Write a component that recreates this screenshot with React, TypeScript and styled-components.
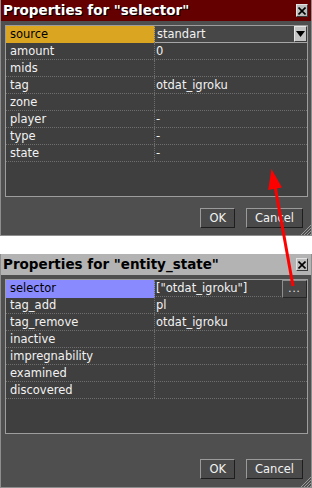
import React from 'react'
import styled, { createGlobalStyle } from 'styled-components'

const GlobalStyle = createGlobalStyle`
  html, body { margin: 0; padding: 0; background: #fff; }
  body { font-family: "DejaVu Sans", Verdana, sans-serif; }
`

const Page = styled.div`
  position: relative;
  width: 312px;
  height: 488px;
  display: flex;
  flex-direction: column;
  gap: 18px;
  overflow: hidden;
`

const Window = styled.section<{ $h: number }>`
  position: relative;
  height: ${p => p.$h}px;
  box-sizing: border-box;
  border: 1px solid #8e8e8e;
  border-top: none;
  background: #4f4f4f;
  display: flex;
  flex-direction: column;
`

const TitleBar = styled.div<{ $active?: boolean }>`
  height: 21px;
  box-sizing: border-box;
  padding: 0 3px 2px 2px;
  display: flex;
  align-items: center;
  justify-content: space-between;
  background: ${p => (p.$active ? '#640000' : '#b3b3b3')};
  color: ${p => (p.$active ? '#fff' : '#000')};
  text-shadow: ${p => (p.$active ? '1px 1px 0 #000' : 'none')};
  font-weight: bold;
  font-size: 13.5px;
  white-space: nowrap;
`

const CloseBox = styled.div`
  width: 12px;
  height: 13px;
  box-sizing: border-box;
  margin-top: 2px;
  background: #bdbdbd;
  border: 1px solid #e2e2e2;
  border-right-color: #3a3a3a;
  border-bottom-color: #3a3a3a;
  display: flex;
  align-items: center;
  justify-content: center;
`

const Body = styled.div`
  padding: 4px 3px 0 4px;
`

const Grid = styled.div<{ $h: number }>`
  height: ${p => p.$h}px;
  box-sizing: border-box;
  border: 1px solid #9d9d9d;
  background: #3f3f3f;
`

const Row = styled.div`
  display: grid;
  grid-template-columns: 149px 1fr;
  height: 17px;
  box-sizing: border-box;
  border-bottom: 1px dotted #6e6e6e;
  font-size: 11.5px;
  line-height: 16px;
`

const Key = styled.div<{ $hl?: string }>`
  padding-left: 4px;
  border-right: 1px dotted #6e6e6e;
  background: ${p => p.$hl ?? 'transparent'};
  color: ${p => (p.$hl ? '#000' : '#f2f2f2')};
  white-space: nowrap;
`

const Value = styled.div`
  display: flex;
  align-items: stretch;
  min-width: 0;
  padding-left: 1px;
  color: #f2f2f2;
  white-space: nowrap;
`

const ValueText = styled.span`
  flex: 1;
`

const SelectBox = styled.div`
  flex: 1;
  display: flex;
  box-sizing: border-box;
  margin-left: -1px;
  padding-left: 2px;
  background: #474747;
  border-bottom: 1px solid #a6a6a6;
`

const SelectArrow = styled.div`
  width: 13px;
  box-sizing: border-box;
  background: #c4c4c4;
  border: 1px solid #e6e6e6;
  border-right-color: #3a3a3a;
  border-bottom-color: #3a3a3a;
  display: flex;
  align-items: center;
  justify-content: center;
`

const DotsButton = styled.div`
  width: 25px;
  box-sizing: border-box;
  background: #474747;
  border: 1px solid #8e8e8e;
  border-right-color: #262626;
  border-bottom-color: #262626;
  color: #f2f2f2;
  font-size: 10px;
  line-height: 16px;
  text-align: center;
  letter-spacing: 1px;
`

const Footer = styled.div<{ $pad: number }>`
  margin-top: auto;
  display: flex;
  justify-content: flex-end;
  gap: 11px;
  padding: 0 8px ${p => p.$pad}px 0;
`

const Button = styled.div`
  height: 20px;
  box-sizing: border-box;
  padding: 0 8px;
  background: #4a4a4a;
  border: 1px solid #9a9a9a;
  border-right-color: #1e1e1e;
  border-bottom-color: #1e1e1e;
  color: #f2f2f2;
  font-size: 11.5px;
  line-height: 18px;
`

const Grip = styled.svg`
  position: absolute;
  right: 0;
  bottom: 0;
`

const Overlay = styled.svg`
  position: absolute;
  left: 0;
  top: 0;
  pointer-events: none;
`

const CloseIcon = () => (
  <svg width="8" height="8" viewBox="0 0 8 8">
    <path d="M0.5 0.5L7.5 7.5M7.5 0.5L0.5 7.5" stroke="#000" strokeWidth="1.6" />
  </svg>
)

const ResizeGrip = () => (
  <Grip width="11" height="11" viewBox="0 0 11 11">
    <path d="M11 1L1 11M11 4L4 11M11 7L7 11M11 10L10 11" stroke="#9a9a9a" strokeWidth="1" />
  </Grip>
)

interface Prop {
  name: string
  value?: string
  hl?: string
  kind?: 'select' | 'dots'
}

const PropRow = ({ name, value, hl, kind }: Prop) => (
  <Row>
    <Key $hl={hl}>{name}</Key>
    <Value>
      {kind === 'select' ? (
        <SelectBox>
          <ValueText>{value}</ValueText>
          <SelectArrow>
            <svg width="9" height="6" viewBox="0 0 9 6">
              <path d="M0 0H9L4.5 6Z" fill="#000" />
            </svg>
          </SelectArrow>
        </SelectBox>
      ) : (
        <ValueText>{value}</ValueText>
      )}
      {kind === 'dots' && <DotsButton>...</DotsButton>}
    </Value>
  </Row>
)

interface DialogProps {
  title: string
  active?: boolean
  height: number
  gridHeight: number
  footerPad: number
  rows: Prop[]
}

const Dialog = ({ title, active, height, gridHeight, footerPad, rows }: DialogProps) => (
  <Window $h={height}>
    <TitleBar $active={active}>
      <span>{title}</span>
      <CloseBox><CloseIcon /></CloseBox>
    </TitleBar>
    <Body>
      <Grid $h={gridHeight}>
        {rows.map(r => <PropRow key={r.name} {...r} />)}
      </Grid>
    </Body>
    <Footer $pad={footerPad}>
      <Button>OK</Button>
      <Button>Cancel</Button>
    </Footer>
    <ResizeGrip />
  </Window>
)

const selectorRows: Prop[] = [
  { name: 'source', value: 'standart', hl: '#daa520', kind: 'select' },
  { name: 'amount', value: '0' },
  { name: 'mids' },
  { name: 'tag', value: 'otdat_igroku' },
  { name: 'zone' },
  { name: 'player', value: '-' },
  { name: 'type', value: '-' },
  { name: 'state', value: '-' },
]

const entityRows: Prop[] = [
  { name: 'selector', value: '["otdat_igroku"]', hl: '#8a8aff', kind: 'dots' },
  { name: 'tag_add', value: 'pl' },
  { name: 'tag_remove', value: 'otdat_igroku' },
  { name: 'inactive' },
  { name: 'impregnability' },
  { name: 'examined' },
  { name: 'discovered' },
]

export default function App() {
  return (
    <Page>
      <GlobalStyle />
      <Dialog title={'Properties for "selector"'} active height={236} gridHeight={172} footerPad={7} rows={selectorRows} />
      <Dialog title={'Properties for "entity_state"'} height={234} gridHeight={155} footerPad={8} rows={entityRows} />
      <Overlay width="312" height="488" viewBox="0 0 312 488">
        <line x1="293" y1="286" x2="275" y2="186" stroke="#ff0000" strokeWidth="3" />
        <polygon points="271.5,169 282,187.4 268.2,190" fill="#ff0000" />
      </Overlay>
    </Page>
  )
}
